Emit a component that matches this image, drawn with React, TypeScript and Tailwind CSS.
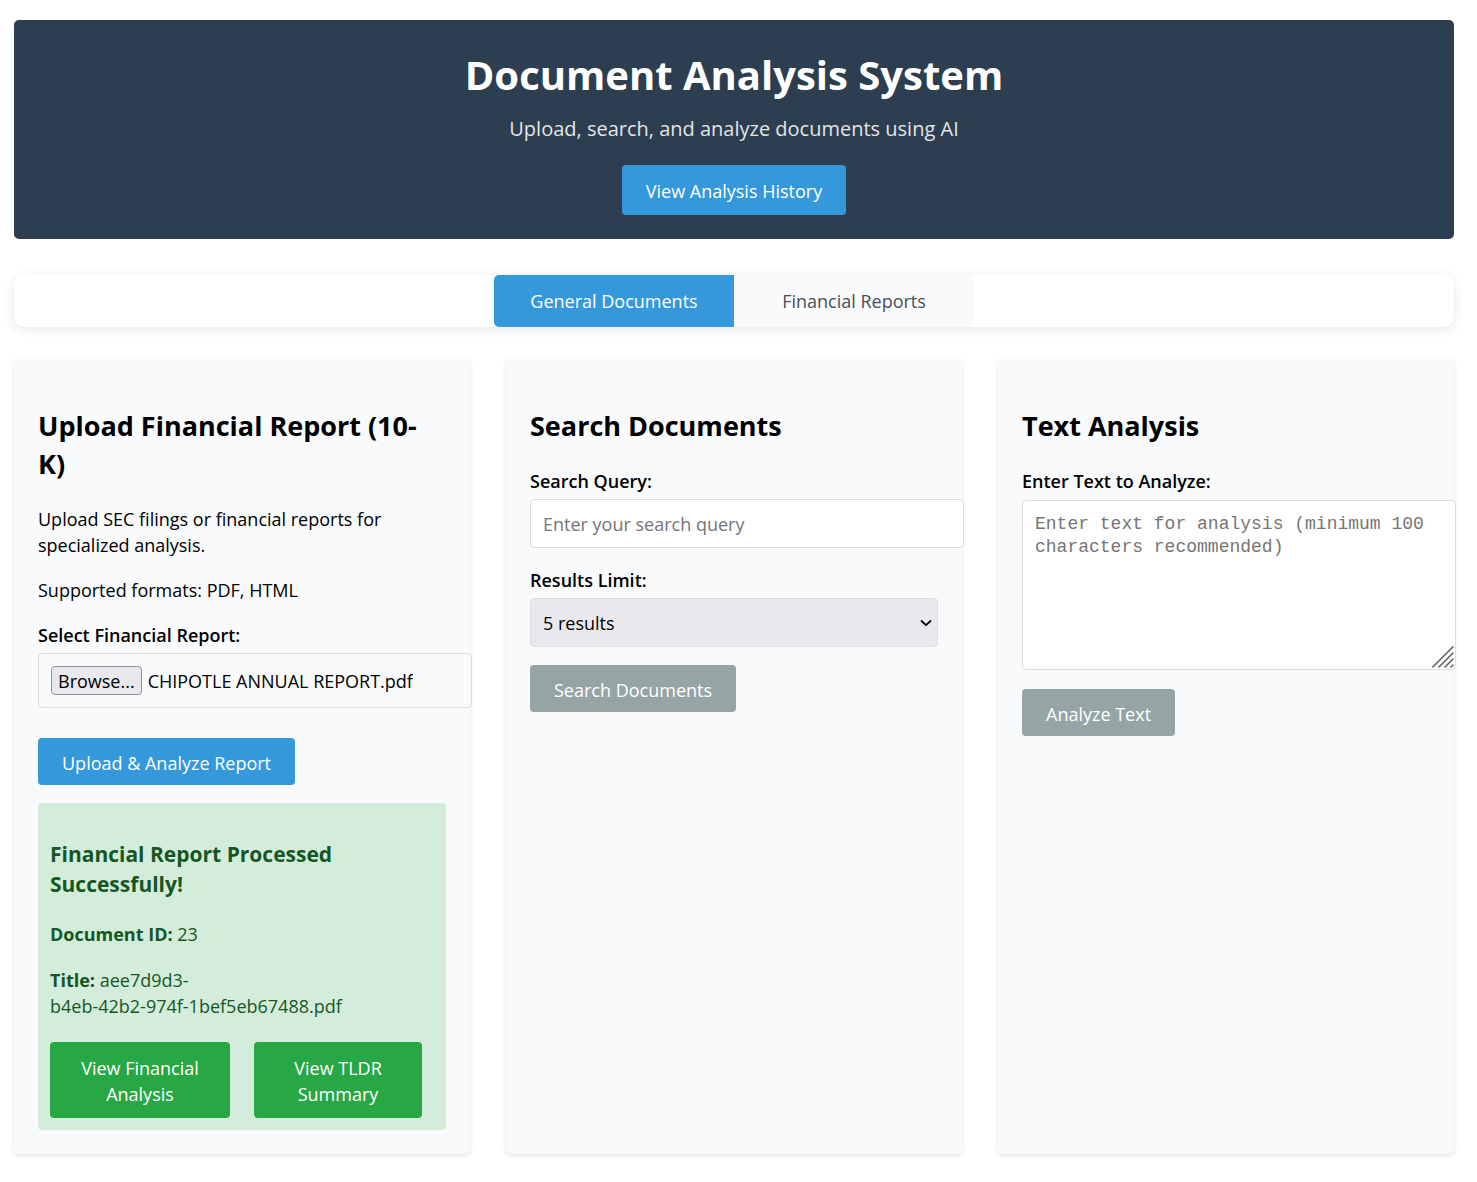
import React, { useRef, useState } from "react";

const fieldBox = "box-content w-full rounded-[4px] border border-[#dddddd] p-3";
const actionButton = "h-[47px] rounded-[4px] px-6 pt-0.5 text-white";

function Card({ title, children }: { title: React.ReactNode; children: React.ReactNode }) {
  return (
    <section className="min-w-0 rounded-[6px] bg-[#f8fafc] p-6 shadow-[0_2px_5px_rgba(0,0,0,0.1)]">
      <h2 className="mt-[25px] mb-[23px] text-[27px] leading-[38px] font-bold">{title}</h2>
      {children}
    </section>
  );
}

function Label({ htmlFor, children }: { htmlFor: string; children: React.ReactNode }) {
  return (
    <label htmlFor={htmlFor} className="mb-[5px] block font-semibold">
      {children}
    </label>
  );
}

function FilePicker({ id }: { id: string }) {
  const input = useRef<HTMLInputElement>(null);
  const [name, setName] = useState("CHIPOTLE ANNUAL REPORT.pdf");
  return (
    <div className={`${fieldBox} flex h-[29px] items-center gap-1.5`}>
      <input
        id={id}
        ref={input}
        type="file"
        accept=".pdf,.html"
        className="hidden"
        onChange={(e) => setName(e.target.files?.[0]?.name ?? "No file selected.")}
      />
      <button
        type="button"
        onClick={() => input.current?.click()}
        className="h-[29px] shrink-0 rounded-[4px] border border-[#8f8f9d] bg-[#e9e9ed] px-1.5 pt-0.5 leading-[25px]"
      >
        Browse...
      </button>
      <span className="truncate">{name}</span>
    </div>
  );
}

function UploadCard() {
  return (
    <Card
      title={
        <>
          Upload Financial Report (10-
          <br />
          K)
        </>
      }
    >
      <p className="mb-[19px]">
        Upload SEC filings or financial reports for specialized analysis.
      </p>
      <p className="mb-[19px]">Supported formats: PDF, HTML</p>
      <Label htmlFor="report">Select Financial Report:</Label>
      <FilePicker id="report" />
      <button type="button" className={`${actionButton} mt-[30px] bg-[#3498db]`}>
        Upload &amp; Analyze Report
      </button>
      <div className="mt-[18px] rounded-[4px] bg-[#d4edda] p-3 text-[#155724]">
        <h3 className="mt-6 mb-[22px] text-[21px] leading-[30px] font-bold">
          Financial Report Processed Successfully!
        </h3>
        <p className="mb-5">
          <strong className="font-bold">Document ID:</strong> 23
        </p>
        <p className="mb-[23px]">
          <strong className="font-bold">Title:</strong> aee7d9d3-
          <wbr />
          <span className="whitespace-nowrap">b4eb-42b2-974f-1bef5eb67488.pdf</span>
        </p>
        <div className="grid grid-cols-[15fr_14fr] gap-6 pr-3 text-center text-white">
          <a href="#analysis" className="rounded-[4px] bg-[#28a745] px-6 pt-[13px] pb-[11px]">
            View Financial Analysis
          </a>
          <a href="#summary" className="rounded-[4px] bg-[#28a745] px-6 pt-[13px] pb-[11px]">
            View TLDR Summary
          </a>
        </div>
      </div>
    </Card>
  );
}

function SearchCard() {
  return (
    <Card title="Search Documents">
      <Label htmlFor="query">Search Query:</Label>
      <input
        id="query"
        type="text"
        placeholder="Enter your search query"
        className={`${fieldBox} block h-[23px] bg-white placeholder:text-[#757575]`}
      />
      <div className="mt-[19px]">
        <Label htmlFor="limit">Results Limit:</Label>
        <div className="relative">
          <select
            id="limit"
            defaultValue="5"
            className="block h-[49px] w-full appearance-none rounded-[4px] border border-[#dddddd] bg-[#e9e9ed] px-3"
          >
            <option value="5">5 results</option>
            <option value="10">10 results</option>
            <option value="20">20 results</option>
          </select>
          <svg
            className="pointer-events-none absolute top-5 right-1.5 h-2.5 w-3"
            viewBox="0 0 12 10"
            fill="none"
            stroke="black"
            strokeWidth="1.8"
            strokeLinecap="round"
            strokeLinejoin="round"
            aria-hidden="true"
          >
            <path d="M1.5 3 L6 7.2 L10.5 3" />
          </svg>
        </div>
      </div>
      <button type="button" disabled className={`${actionButton} mt-[18px] bg-[#95a5a6]`}>
        Search Documents
      </button>
    </Card>
  );
}

function AnalysisCard() {
  return (
    <Card title="Text Analysis">
      <Label htmlFor="text">Enter Text to Analyze:</Label>
      <div className="relative mt-1.5 box-content w-full pr-[26px]">
        <textarea
          id="text"
          placeholder="Enter text for analysis (minimum 100 characters recommended)"
          className={`${fieldBox} block h-36 resize-none bg-white font-['Liberation_Mono',monospace] leading-[23px] placeholder:text-[#757575]`}
        />
        <svg
          className="pointer-events-none absolute right-0.5 bottom-0.5 size-[22px]"
          viewBox="0 0 22 22"
          stroke="#606060"
          strokeWidth="1.6"
          strokeLinecap="round"
          aria-hidden="true"
        >
          <path d="M0.8 21 L21 0.8 M7 21 L21 7 M13 21 L21 13 M19 21 L21 19" />
        </svg>
      </div>
      <button type="button" disabled className={`${actionButton} mt-[19px] bg-[#95a5a6]`}>
        Analyze Text
      </button>
    </Card>
  );
}

export default function App() {
  return (
    <div className="overflow-x-hidden bg-white pt-5 pr-[23px] pb-7 pl-3.5 font-['Open_Sans','Noto_Sans',sans-serif] text-[18px] leading-[26px] text-black">
      <div className="mx-auto max-w-[1440px]">
        <header className="rounded-[5px] bg-[#2c3e50] px-6 pt-[25px] pb-6 text-center text-white">
          <h1 className="text-[40px] leading-[60px] font-bold">Document Analysis System</h1>
          <p className="mt-2.5 text-[20px] leading-7 text-[#e3e5e8]">
            Upload, search, and analyze documents using AI
          </p>
          <a
            href="#history"
            className="mt-[22px] inline-block rounded-[4px] bg-[#3498db] px-6 pt-[13px] pb-[11px] align-top"
          >
            View Analysis History
          </a>
        </header>

        <nav className="mt-9 flex justify-center rounded-[10px] bg-white shadow-[0_2px_12px_rgba(0,0,0,0.1)]">
          <button
            type="button"
            className="h-[52px] w-60 rounded-l-[5px] bg-[#3498db] text-white"
          >
            General Documents
          </button>
          <button
            type="button"
            className="h-[52px] w-60 rounded-r-[5px] bg-[#f8fafc] text-[#495057]"
          >
            Financial Reports
          </button>
        </nav>

        <main className="mt-[31px] grid grid-cols-3 gap-9">
          <UploadCard />
          <SearchCard />
          <AnalysisCard />
        </main>
      </div>
    </div>
  );
}
